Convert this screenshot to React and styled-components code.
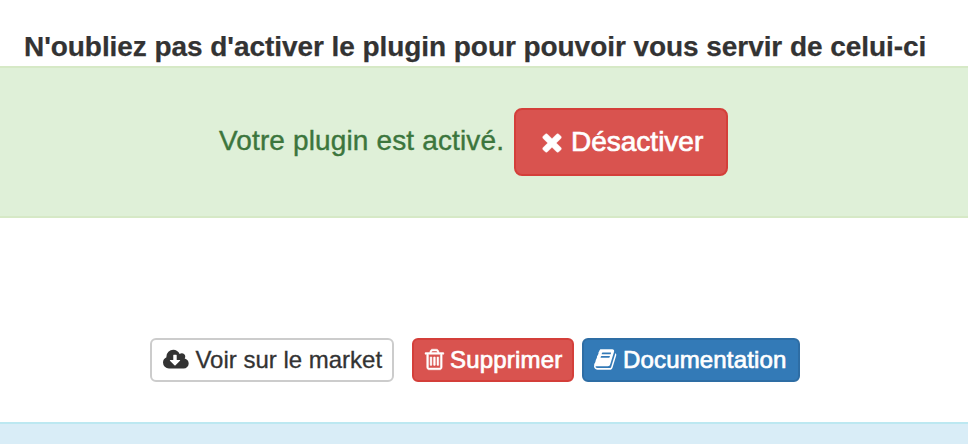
import React from "react";
import styled, { createGlobalStyle, css } from "styled-components";

const GlobalStyle = createGlobalStyle`
  *, *::before, *::after { box-sizing: border-box; }
  body {
    margin: 0;
    overflow: hidden;
    background: #fff;
    color: #333;
    font-family: "Liberation Sans", Arial, sans-serif;
    -webkit-font-smoothing: antialiased;
  }
`;

const Page = styled.main`
  display: flex;
  flex-direction: column;
  height: 444px;
  overflow: hidden;
`;

const Title = styled.h1`
  margin: 0;
  padding: 27px 0 0 24px;
  height: 66px;
  flex: none;
  font-size: 28px;
  line-height: 40px;
  font-weight: 700;
  letter-spacing: -0.06px;
  white-space: nowrap;
  -webkit-text-stroke: 0.25px currentColor;
`;

const StatusPanel = styled.section`
  display: flex;
  flex: none;
  align-items: flex-start;
  gap: 10px;
  height: 152px;
  padding: 40px 0 0 219px;
  background: #dff0d8;
  border: solid #d6e9c6;
  border-width: 2px 0;
`;

const StatusText = styled.p`
  margin: 0;
  padding-top: 13px;
  width: 285px;
  color: #3c763d;
  font-size: 28px;
  line-height: 40px;
  letter-spacing: 0.14px;
  white-space: nowrap;
  -webkit-text-stroke: 0.4px currentColor;
`;

const variants = {
  plain: css`background: #fff; border-color: #ccc; color: #333;`,
  danger: css`background: #d9534f; border-color: #d43f3a; color: #fff;`,
  primary: css`background: #337ab7; border-color: #2e6da4; color: #fff;`,
};

const Button = styled.button`
  display: inline-flex;
  flex: none;
  align-items: center;
  gap: ${({ $large }) => ($large ? 8 : 6.7)}px;
  width: ${({ $width }) => $width}px;
  height: ${({ $large }) => ($large ? 68 : 44)}px;
  padding: 0 0 0 ${({ $large, $inset = 11 }) => ($large ? 25 : $inset)}px;
  border: 2px solid;
  border-radius: ${({ $large }) => ($large ? 8 : 6)}px;
  font-family: inherit;
  font-size: ${({ $large }) => ($large ? 28 : 24)}px;
  line-height: 36px;
  white-space: nowrap;
  ${({ $variant }) => variants[$variant]}
`;

const Label = styled.span`
  letter-spacing: ${({ $tracking = 0 }) => $tracking}px;
  -webkit-text-stroke: ${({ $weight = 0.3 }) => $weight}px currentColor;
`;

const Glyph = styled.svg`
  display: block;
  flex: none;
  width: ${({ $width }) => $width}px;
  height: ${({ $height }) => $height}px;
  fill: currentColor;
  stroke: currentColor;
  stroke-width: ${({ $stroke = 0 }) => $stroke};
  overflow: visible;
`;

const Actions = styled.nav`
  display: flex;
  flex: none;
  gap: 8px;
  height: 204px;
  padding: 120px 0 0 150px;

  & > :first-child { margin-right: 10px; }
`;

const InfoPanel = styled.section`
  flex: 1;
  background: #d9edf7;
  border-top: 2px solid #bce8f1;
`;

const TimesIcon = () => (
  <Glyph viewBox="192 0 1408 1792" $width={22} $height={28} $stroke={30} aria-hidden="true">
    <path d="M1490 1322q0 40-28 68l-136 136q-28 28-68 28t-68-28l-294-294-294 294q-28 28-68 28t-68-28l-136-136q-28-28-28-68t28-68l294-294-294-294q-28-28-28-68t28-68l136-136q28-28 68-28t68 28l294 294 294-294q28-28 68-28t68 28l136 136q28 28 28 68t-28 68l-294 294 294 294q28 28 28 68z" />
  </Glyph>
);

const CloudIcon = () => (
  <Glyph viewBox="0 0 1920 1792" $width={25.7} $height={24} aria-hidden="true">
    <path d="M1280 928q0-14-9-23t-23-9h-224v-352q0-13-9.500-22.500t-22.500-9.500h-192q-13 0-22.500 9.500t-9.500 22.500v352h-224q-13 0-22.500 9.500t-9.500 22.500q0 14 9 23l352 352q9 9 23 9t23-9l351-351q10-12 10-24zm640 224q0 159-112.500 271.500t-271.500 112.500h-1088q-185 0-316.500-131.500t-131.500-316.500q0-130 70-240t188-165q-2-30-2-43 0-212 150-362t362-150q156 0 285.500 87t188.500 231q71-62 166-62 106 0 181 75t75 181q0 76-41 138 130 31 213.500 135.500t83.500 238.500z" />
  </Glyph>
);

const TrashIcon = () => (
  <Glyph viewBox="192 40 1408 1792" $width={18.86} $height={24} $stroke={36} aria-hidden="true">
    <path d="M704 736v576q0 14-9 23t-23 9h-64q-14 0-23-9t-9-23v-576q0-14 9-23t23-9h64q14 0 23 9t9 23zm256 0v576q0 14-9 23t-23 9h-64q-14 0-23-9t-9-23v-576q0-14 9-23t23-9h64q14 0 23 9t9 23zm256 0v576q0 14-9 23t-23 9h-64q-14 0-23-9t-9-23v-576q0-14 9-23t23-9h64q14 0 23 9t9 23zm128 724v-948h-896v948q0 22 7 40.500t14.500 27 10.500 8.500h832q3 0 10.500-8.500t14.500-27 7-40.500zm-672-1076h448l-48-117q-7-9-17-11h-317q-10 2-17 11zm928 32v64q0 14-9 23t-23 9h-96v948q0 83-47 143.500t-113 60.500h-832q-66 0-113-58.500t-47-141.500v-952h-96q-14 0-23-9t-9-23v-64q0-14 9-23t23-9h309l70-167q15-37 54-63t79-26h320q40 0 79 26t54 63l70 167h309q14 0 23 9t9 23z" />
  </Glyph>
);

const BookIcon = () => (
  <Glyph viewBox="0 40 1664 1792" $width={22.3} $height={24} aria-hidden="true">
    <path d="M1639 478q40 57 18 129l-275 906q-19 64-76.500 107.500t-122.500 43.500h-923q-77 0-148.500-53.500t-99.500-131.500q-24-67-2-127 0-4 3-27t4-37q1-8-3-21.500t-3-19.500q2-11 8-21t16.500-23.500 16.500-23.500q23-38 45-91.500t30-91.500q3-10 .5-30t-.5-28q3-11 17-28t17-23q21-36 42-92t25-90q1-9-2.500-32t.5-28q4-13 22-30.500t22-22.500q19-26 42.500-84.500t27.500-96.500q1-8-3-25.500t-2-26.500q2-8 9-18t18-23 17-21q8-12 16.500-30.500t15-35 16-36 19.500-32 26.500-23.500 36-11.500 47.500 5.500l-1 3q38-9 51-9h761q74 0 114 56t18 130l-274 906q-36 119-71.500 153.500t-128.500 34.500h-869q-27 0-38 15-11 16-1 43 24 70 144 70h923q29 0 56-15.500t35-41.500l300-987q7-22 5-57 38 15 59 43zm-1064 2q-4 13 2 22.500t20 9.500h608q13 0 25.500-9.500t16.500-22.500l21-64q4-13-2-22.500t-20-9.500h-608q-13 0-25.500 9.500t-16.500 22.500zm-83 256q-4 13 2 22.500t20 9.500h608q13 0 25.500-9.500t16.500-22.500l21-64q4-13-2-22.500t-20-9.500h-608q-13 0-25.500 9.500t-16.500 22.500z" />
  </Glyph>
);

export default function App() {
  return (
    <>
      <GlobalStyle />
      <Page>
        <Title>N'oubliez pas d'activer le plugin pour pouvoir vous servir de celui-ci</Title>
        <StatusPanel>
          <StatusText>Votre plugin est activé.</StatusText>
          <Button $variant="danger" $large $width={214}>
            <TimesIcon />
            <Label $weight={0.7}>Désactiver</Label>
          </Button>
        </StatusPanel>
        <Actions>
          <Button $variant="plain" $width={244}>
            <CloudIcon />
            <Label>Voir sur le market</Label>
          </Button>
          <Button $variant="danger" $width={162} $inset={10.5}>
            <TrashIcon />
            <Label $weight={0.7} $tracking={0.18}>Supprimer</Label>
          </Button>
          <Button $variant="primary" $width={218} $inset={10}>
            <BookIcon />
            <Label $weight={0.7} $tracking={0.16}>Documentation</Label>
          </Button>
        </Actions>
        <InfoPanel />
      </Page>
    </>
  );
}
